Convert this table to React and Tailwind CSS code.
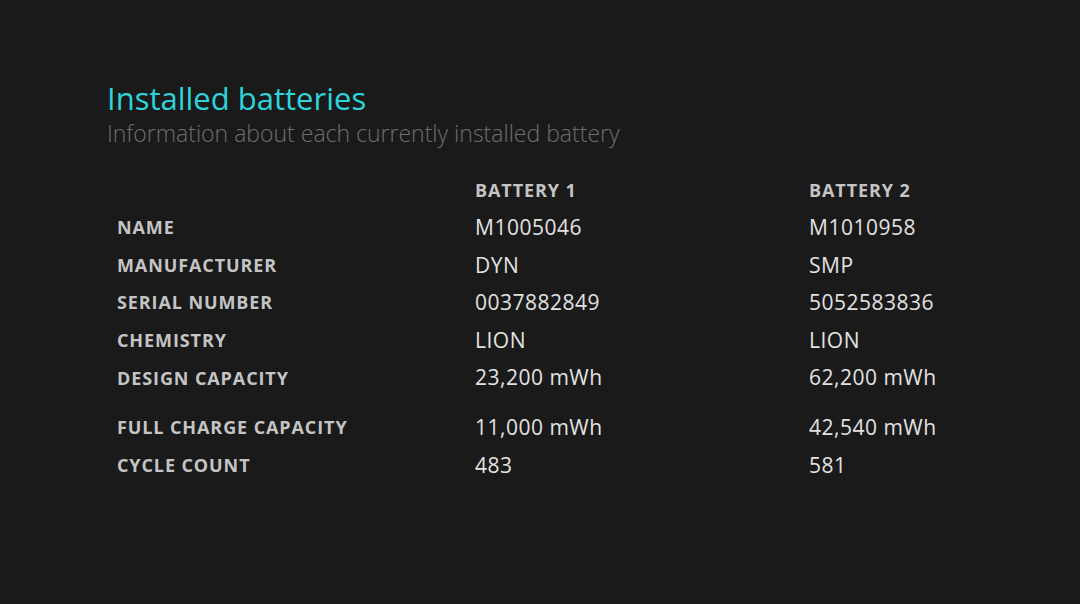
export default function App() {
  const rows = [
    ["NAME", "M1005046", "M1010958"],
    ["MANUFACTURER", "DYN", "SMP"],
    ["SERIAL NUMBER", "0037882849", "5052583836"],
    ["CHEMISTRY", "LION", "LION"],
    ["DESIGN CAPACITY", "23,200 mWh", "62,200 mWh"],
    ["FULL CHARGE CAPACITY", "11,000 mWh", "42,540 mWh", true],
    ["CYCLE COUNT", "483", "581"],
  ];
  const font = { fontFamily: '"Segoe UI", "Open Sans", "Noto Sans", sans-serif' };
  const label = "h-[37.6px] flex items-center text-[18px] font-bold tracking-[0.9px] text-[#c4c4c4]";
  const value = "h-[37.6px] flex items-center text-[21px] tracking-[0.5px] text-[#e2e2e2]";
  return (
    <div className="w-[1080px] h-[604px] bg-[#1a1a1a] overflow-hidden pt-[77px] pl-[107px]" style={font}>
      <h1 className="text-[31px] leading-[42px] text-[#2dd4dc] font-normal">Installed batteries</h1>
      <p className="text-[23px] leading-[30px] font-light text-[#6e6e6e] -mt-[1px]">
        Information about each currently installed battery
      </p>
      <div className="mt-[24px] ml-[10px] grid grid-cols-[358px_334px_1fr]">
        <div className="h-[37px]" />
        <div className="h-[37px] flex items-center text-[18px] font-bold tracking-[0.9px] text-[#c4c4c4]">BATTERY 1</div>
        <div className="h-[37px] flex items-center text-[18px] font-bold tracking-[0.9px] text-[#c4c4c4]">BATTERY 2</div>
        {rows.map(([l, a, b, gap]) => (
          <div key={l} className="contents">
            <div className={`${label} ${gap ? "mt-[12px]" : ""}`}>{l}</div>
            <div className={`${value} ${gap ? "mt-[12px]" : ""}`}>{a}</div>
            <div className={`${value} ${gap ? "mt-[12px]" : ""}`}>{b}</div>
          </div>
        ))}
      </div>
    </div>
  );
}
